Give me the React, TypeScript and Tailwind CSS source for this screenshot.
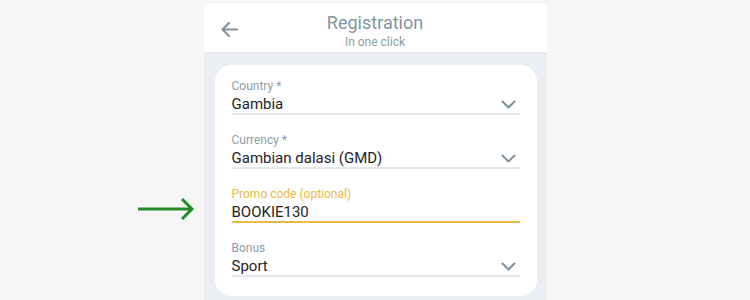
interface FieldProps {
  label: string;
  value: string;
  active?: boolean;
  select?: boolean;
}

function Chevron() {
  return (
    <svg width="15" height="9" viewBox="0 0 15 9" className="mr-[4px]">
      <polyline points="1.5,1.5 7.5,7.5 13.5,1.5" fill="none" stroke="#7d929d" strokeWidth="2" strokeLinecap="round" strokeLinejoin="round" />
    </svg>
  )
}

function Field({ label, value, active, select = true }: FieldProps) {
  return (
    <div>
      <div className={`text-[12px] leading-[16px] ${active ? "text-[#e9b949]" : "text-[#8d9ea8]"}`}>{label}</div>
      <div
        className={`flex items-center justify-between h-[21px] pt-[1px] border-b-2 ${
          active ? "border-[#e9b949]" : "border-[#e3e8ec]"
        }`}
      >
        <span className="text-[15px] leading-[18px] text-[#1f2326]">{value}</span>
        {select && <Chevron />}
      </div>
    </div>
  )
}

export default function App() {
  return (
    <div className="w-[750px] h-[300px] bg-[#f6f6f6] flex justify-center overflow-hidden font-['Roboto',sans-serif]">
      <div className="relative w-[343px] mt-[4px] bg-[#ebeef3] flex flex-col">
        <div className="relative h-[48px] bg-white shadow-[0_1px_2px_rgba(0,0,0,0.04)] flex flex-col items-center">
          <svg width="17" height="15" viewBox="0 0 17 15" className="absolute left-[17px] top-[18px]">
            <path d="M16 7.5H1.5M8 1 1.5 7.5 8 14" fill="none" stroke="#7d929d" strokeWidth="2" strokeLinecap="round" strokeLinejoin="round" />
          </svg>
          <div className="mt-[7px] text-[18px] leading-[24px] text-[#7f969f]">Registration</div>
          <div className="text-[12px] leading-[14px] text-[#8d9ea8]">In one click</div>
        </div>

        <div className="mt-[13px] ml-[11px] mr-[10px] bg-white rounded-[16px] pt-[13px] pb-[19px] px-[17px] flex flex-col gap-[17px]">
          <Field label="Country *" value="Gambia" />
          <Field label="Currency *" value="Gambian dalasi (GMD)" />
          <Field label="Promo code (optional)" value="BOOKIE130" active select={false} />
          <Field label="Bonus" value="Sport" />
        </div>

        <svg width="58" height="24" viewBox="0 0 58 24" className="absolute left-[-67px] top-[193px]">
          <path d="M1 12h54M45 2l10 10-10 10" fill="none" stroke="#228b2b" strokeWidth="3" />
        </svg>
      </div>
    </div>
  )
}
